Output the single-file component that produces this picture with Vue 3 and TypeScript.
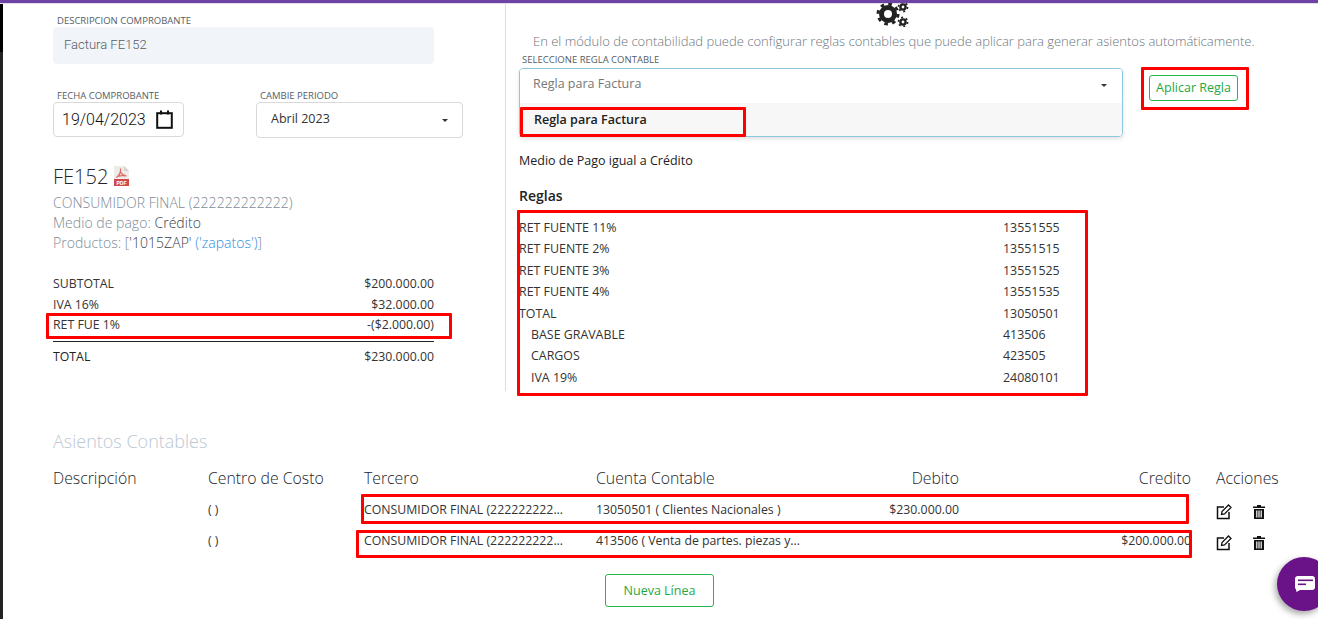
<template>
  <div class="page">
    <div class="topbar"></div>
    <div class="main">
      <div class="strip"></div>
      <div class="content">
        <div class="top">
          <!-- Comprobante -->
          <section class="left">
            <label class="field-label desc-label">DESCRIPCION COMPROBANTE</label>
            <div class="desc-input">Factura FE152</div>

            <div class="date-row">
              <div class="date-col">
                <label class="field-label">FECHA COMPROBANTE</label>
                <div class="date-input">
                  <span>19/04/2023</span>
                  <svg width="17" height="19" viewBox="0 0 17 19">
                    <rect x="1.2" y="3.2" width="14.6" height="14.6" fill="none" stroke="#111" stroke-width="2" />
                    <rect x="4" y="0.5" width="2" height="4" fill="#111" />
                    <rect x="11" y="0.5" width="2" height="4" fill="#111" />
                  </svg>
                </div>
              </div>
              <div class="period-col">
                <label class="field-label">CAMBIE PERIODO</label>
                <div class="period-select">
                  <span>Abril 2023</span>
                  <i class="caret"></i>
                </div>
              </div>
            </div>

            <h2 class="doc-title">
              FE152
              <svg class="pdf" width="15" height="20" viewBox="0 0 15 20">
                <path d="M0 0H10L15 5V20H0Z" fill="#efebe6" />
                <path d="M10 0L15 5H10Z" fill="#d8d2cc" />
                <path d="M6.5 2.5C7 6 5.5 9 2.5 11.5M6.5 6C7.5 8 9.5 9.5 12.5 10M3.5 10.5C6 9.5 9 9.3 12 10" fill="none" stroke="#dd6a66" stroke-width="1.2" />
                <rect x="0" y="13" width="15" height="7" fill="#d2494b" />
                <text x="7.5" y="18.6" class="pdf-text">PDF</text>
              </svg>
            </h2>
            <p class="doc-line">CONSUMIDOR FINAL (222222222222)</p>
            <p class="doc-line">Medio de pago: <span class="dark">Crédito</span></p>
            <p class="doc-line">Productos: [<span class="dark">'1015ZAP'</span> <span class="link">('zapatos')</span>]</p>

            <div class="totals">
              <div class="total-row"><span>SUBTOTAL</span><span>$200.000.00</span></div>
              <div class="total-row"><span>IVA 16%</span><span>$32.000.00</span></div>
              <div class="total-row last"><span>RET FUE 1%</span><span>-($2.000.00)</span></div>
              <div class="total-row sum"><strong>TOTAL</strong><span>$230.000.00</span></div>
            </div>
          </section>

          <!-- Reglas contables -->
          <section class="right">
            <div class="gears">
              <svg width="33" height="24" viewBox="0 0 33 24">
                <circle cx="12" cy="11" r="6.5" fill="none" stroke="#222" stroke-width="5" />
                <circle cx="12" cy="11" r="10" fill="none" stroke="#222" stroke-width="3" stroke-dasharray="3.6 4.25" />
                <circle cx="27" cy="4" r="2.6" fill="none" stroke="#222" stroke-width="2.4" />
                <circle cx="27" cy="4" r="4.6" fill="none" stroke="#222" stroke-width="1.6" stroke-dasharray="2 2.8" />
                <circle cx="27" cy="19" r="2.6" fill="none" stroke="#222" stroke-width="2.4" />
                <circle cx="27" cy="19" r="4.6" fill="none" stroke="#222" stroke-width="1.6" stroke-dasharray="2 2.8" />
              </svg>
            </div>
            <p class="intro">En el módulo de contabilidad puede configurar reglas contables que puede aplicar para generar asientos automáticamente.</p>
            <label class="field-label rule-label">SELECCIONE REGLA CONTABLE</label>
            <div class="rule-row">
              <div class="rule-select">
                <div class="rule-head">
                  <span>Regla para Factura</span>
                  <i class="caret"></i>
                </div>
                <div class="rule-menu">Regla para Factura</div>
              </div>
              <button class="btn apply">Aplicar Regla</button>
            </div>
            <p class="condition">Medio de Pago igual a Crédito</p>
            <h3 class="rules-title">Reglas</h3>
            <ul class="rules">
              <li v-for="rule in rules" :key="rule.code" :class="{ sub: rule.sub }">
                <span class="rule-name">{{ rule.name }}</span>
                <span>{{ rule.code }}</span>
              </li>
            </ul>
          </section>
        </div>

        <!-- Asientos -->
        <section class="entries">
          <h2 class="entries-title">Asientos Contables</h2>
          <div class="grid head">
            <span>Descripción</span>
            <span>Centro de Costo</span>
            <span>Tercero</span>
            <span>Cuenta Contable</span>
            <span class="num">Debito</span>
            <span class="num">Credito</span>
            <span class="actions-head">Acciones</span>
          </div>
          <div v-for="(line, i) in lines" :key="i" class="grid line">
            <span></span>
            <span>( )</span>
            <span>{{ line.third }}</span>
            <span>{{ line.account }}</span>
            <span class="num">{{ line.debit }}</span>
            <span class="num">{{ line.credit }}</span>
            <span class="actions">
              <svg width="16" height="16" viewBox="0 0 16 16">
                <path d="M8 3H1.5V14.5H13V8" fill="none" stroke="#111" stroke-width="1.5" />
                <path d="M5.5 10.5L6 7.5L12.5 1L15 3.5L8.5 10Z" fill="none" stroke="#111" stroke-width="1.3" />
              </svg>
              <svg width="12" height="14" viewBox="0 0 12 14">
                <path d="M0 1.5H4V0H8V1.5H12V3H0Z" fill="#111" />
                <path d="M1 4H11V14H1ZM3.2 5.5V12.5H4.4V5.5ZM5.4 5.5V12.5H6.6V5.5ZM7.6 5.5V12.5H8.8V5.5Z" fill="#111" fill-rule="evenodd" />
              </svg>
            </span>
          </div>
          <div class="new-line">
            <button class="btn add">Nueva Línea</button>
          </div>
        </section>
      </div>
    </div>

    <!-- Marcas rojas sobre la captura -->
    <div v-for="mark in marks" :key="mark.id" class="mark" :style="mark.style"></div>

    <div class="chat">
      <svg width="20" height="16" viewBox="0 0 20 16">
        <path d="M3 0H17A3 3 0 0 1 20 3V11A3 3 0 0 1 17 14H5L1.5 16L1 13.5A3 3 0 0 1 0 11V3A3 3 0 0 1 3 0Z" fill="#fff" />
        <rect x="3" y="3.5" width="15" height="1.6" fill="#6a1287" />
        <rect x="3" y="7.5" width="8" height="1.6" fill="#6a1287" />
      </svg>
    </div>
  </div>
</template>

<script setup lang="ts">
interface Rule {
  name: string
  code: string
  sub?: boolean
}

const rules: Rule[] = [
  { name: 'RET FUENTE 11%', code: '13551555' },
  { name: 'RET FUENTE 2%', code: '13551515' },
  { name: 'RET FUENTE 3%', code: '13551525' },
  { name: 'RET FUENTE 4%', code: '13551535' },
  { name: 'TOTAL', code: '13050501' },
  { name: 'BASE GRAVABLE', code: '413506', sub: true },
  { name: 'CARGOS', code: '423505', sub: true },
  { name: 'IVA 19%', code: '24080101', sub: true },
]

const lines = [
  {
    third: 'CONSUMIDOR FINAL (222222222...',
    account: '13050501 ( Clientes Nacionales )',
    debit: '$230.000.00',
    credit: '',
  },
  {
    third: 'CONSUMIDOR FINAL (222222222...',
    account: '413506 ( Venta de partes. piezas y...',
    debit: '',
    credit: '$200.000.00',
  },
]

// x0, y0, x1, y1 of each red annotation box
const boxes: [number, number, number, number][] = [
  [1141, 67, 1249, 110],
  [520, 107, 746, 137],
  [517, 210, 1088, 396],
  [46, 313, 452, 339],
  [361, 494, 1189, 524],
  [356, 530, 1192, 558],
]

const marks = boxes.map(([x0, y0, x1, y1], id) => ({
  id,
  style: {
    left: `${x0}px`,
    top: `${y0}px`,
    width: `${x1 - x0}px`,
    height: `${y1 - y0}px`,
  },
}))
</script>

<style>
html,
body {
  margin: 0;
  background: #fff;
}
</style>

<style scoped>
.page {
  position: relative;
  width: 1318px;
  height: 619px;
  overflow: hidden;
  display: flex;
  flex-direction: column;
  font-family: "Open Sans", sans-serif;
  font-weight: 300;
  color: #212529;
  background: #fff;
}

.topbar {
  height: 3px;
  flex: none;
  background: #6f42a6;
  border-bottom: 1px solid #e4e0ea;
}

.main {
  flex: 1;
  display: flex;
  min-height: 0;
}

.strip {
  width: 3px;
  flex: none;
  background: linear-gradient(#000 48px, #222 48px);
}

.content {
  flex: 1;
  min-width: 0;
}

.top {
  display: flex;
  height: 387px;
}

.left {
  width: 502px;
  box-sizing: border-box;
  padding: 0 0 0 50px;
}

.field-label {
  display: block;
  font-size: 9.5px;
  font-weight: 400;
  line-height: 12px;
  color: #555e66;
  padding-left: 4px;
}

.desc-label {
  margin-top: 11px;
}

.desc-input {
  width: 381px;
  height: 37px;
  box-sizing: border-box;
  padding: 0 11px 3px;
  display: flex;
  align-items: center;
  background: #f1f4f8;
  border-radius: 4px;
  font-family: Roboto, sans-serif;
  font-size: 13px;
  font-weight: 300;
  color: #555e66;
}

.date-row {
  display: flex;
  margin-top: 26px;
}

.date-col {
  width: 203px;
}

.period-col {
  width: 207px;
}

.date-input,
.period-select {
  height: 35px;
  box-sizing: border-box;
  display: flex;
  align-items: center;
  border: 1px solid #d9d9d9;
  border-radius: 4px;
}

.date-input {
  width: 131px;
  padding: 0 10px 0 8px;
  justify-content: space-between;
  font-family: Roboto, sans-serif;
  font-size: 16px;
  font-weight: 300;
  color: #111;
}

.period-select {
  height: 36px;
  padding: 0 14px 3px;
  justify-content: space-between;
  font-size: 12.5px;
  font-weight: 400;
  color: #333;
}

.caret {
  width: 0;
  height: 0;
  border-left: 3.5px solid transparent;
  border-right: 3.5px solid transparent;
  border-top: 3.5px solid #333;
  margin-top: 3px;
}

.doc-title {
  margin: 26px 0 0;
  display: flex;
  align-items: center;
  gap: 6px;
  height: 24px;
  font-size: 20px;
  font-weight: 300;
  color: #212529;
}

.doc-line {
  margin: 0;
  width: 400px;
  font-size: 14px;
  letter-spacing: 0.03px;
  line-height: 20px;
  color: #7d8a96;
}

.doc-title + .doc-line {
  margin-top: 5px;
}

.pdf-text {
  font-family: "Liberation Sans", sans-serif;
  font-size: 5px;
  font-weight: 700;
  fill: #fff;
  text-anchor: middle;
}

.dark {
  color: #39414a;
}

.link {
  color: #2d8fe0;
  font-weight: 300;
}

.totals {
  margin-top: 21px;
  width: 381px;
  font-size: 12.3px;
  font-weight: 400;
  color: #333;
}

.total-row {
  display: flex;
  justify-content: space-between;
  height: 20.5px;
  line-height: 20.5px;
}

.total-row.last {
  height: 26px;
  border-bottom: 1px solid #222;
}

.total-row.sum {
  margin-top: 5px;
}

.total-row strong {
  font-weight: 500;
  color: #222;
}

.right {
  flex: 1;
  min-width: 0;
  border-left: 1px solid #dedede;
  padding-left: 13px;
}

.gears {
  width: 33px;
  height: 24px;
  margin-left: 357px;
  margin-top: -1px;
}

.intro {
  margin: 4px 0 0 14px;
  font-size: 13px;
  line-height: 20px;
  white-space: nowrap;
  color: #6c757d;
}

.rule-label {
  margin-top: 3px;
  padding-left: 3px;
}

.rule-row {
  display: flex;
  align-items: flex-start;
  gap: 26px;
  margin-top: 2px;
}

.rule-select {
  width: 604px;
  height: 69px;
  box-sizing: border-box;
  border: 1px solid #8ec8dc;
  border-radius: 4px;
  box-shadow: 0 2px 4px rgba(0, 0, 0, 0.12);
  overflow: hidden;
}

.rule-head {
  height: 34px;
  box-sizing: border-box;
  padding: 0 15px 5px 13px;
  display: flex;
  align-items: center;
  justify-content: space-between;
  font-size: 12.5px;
  font-weight: 400;
  color: #777;
  background: #fff;
}

.rule-menu {
  height: 33px;
  box-sizing: border-box;
  padding: 0 14px;
  display: flex;
  align-items: center;
  background: #f7f7f7;
  font-size: 12.5px;
  font-weight: 600;
  color: #222;
}

.btn {
  font-family: inherit;
  background: #fff;
  border: 1px solid #28b44c;
  border-radius: 3px;
  color: #1fa83f;
  font-weight: 400;
  cursor: pointer;
  padding: 0;
}

.apply {
  width: 89px;
  height: 26px;
  margin-top: 7px;
  padding-bottom: 2px;
  font-size: 12.5px;
}

.condition {
  margin: 15px 0 0;
  font-size: 12.5px;
  font-weight: 400;
  line-height: 18px;
  color: #222;
}

.rules-title {
  margin: 16px 0 0;
  font-size: 14px;
  font-weight: 600;
  line-height: 20px;
  color: #222;
}

.rules {
  list-style: none;
  margin: 11px 0 0;
  padding: 0;
  font-size: 12.4px;
  font-weight: 400;
  color: #333;
}

.rules li {
  display: flex;
  height: 21.4px;
  line-height: 21.4px;
}

.rule-name {
  width: 484px;
}

.rules li.sub .rule-name {
  width: 472px;
  padding-left: 12px;
}

.entries {
  padding-left: 50px;
}

.entries-title {
  margin: 38px 0 0;
  font-size: 18px;
  font-weight: 300;
  line-height: 25px;
  color: #bcc7d2;
}

.grid {
  display: grid;
  grid-template-columns: 155px 156px 232px 232px 131px 232px 1fr;
  align-items: center;
}

.head {
  height: 24px;
  margin-top: 12px;
  font-size: 15.8px;
  color: #212529;
}

.line {
  height: 31px;
  font-size: 12.3px;
  font-weight: 400;
  color: #333;
}

.head + .line {
  margin-top: 4px;
}

.num {
  text-align: right;
}

.actions-head {
  padding-left: 25px;
}

.actions {
  display: flex;
  align-items: center;
  gap: 21px;
  padding-left: 25px;
  padding-top: 4px;
}

.new-line {
  width: 1213px;
  display: flex;
  justify-content: center;
  margin-top: 18px;
}

.add {
  width: 109px;
  height: 33px;
  font-size: 12.5px;
}

.mark {
  position: absolute;
  box-sizing: border-box;
  border: 3px solid #f00;
  border-radius: 1px;
  pointer-events: none;
}

.chat {
  position: absolute;
  left: 1277px;
  top: 557px;
  width: 54px;
  height: 54px;
  border-radius: 50%;
  background: #6a1287;
  box-shadow: -2px 3px 6px rgba(0, 0, 0, 0.35);
  display: flex;
  align-items: center;
  padding: 0 0 0 18px;
  box-sizing: border-box;
}
</style>
